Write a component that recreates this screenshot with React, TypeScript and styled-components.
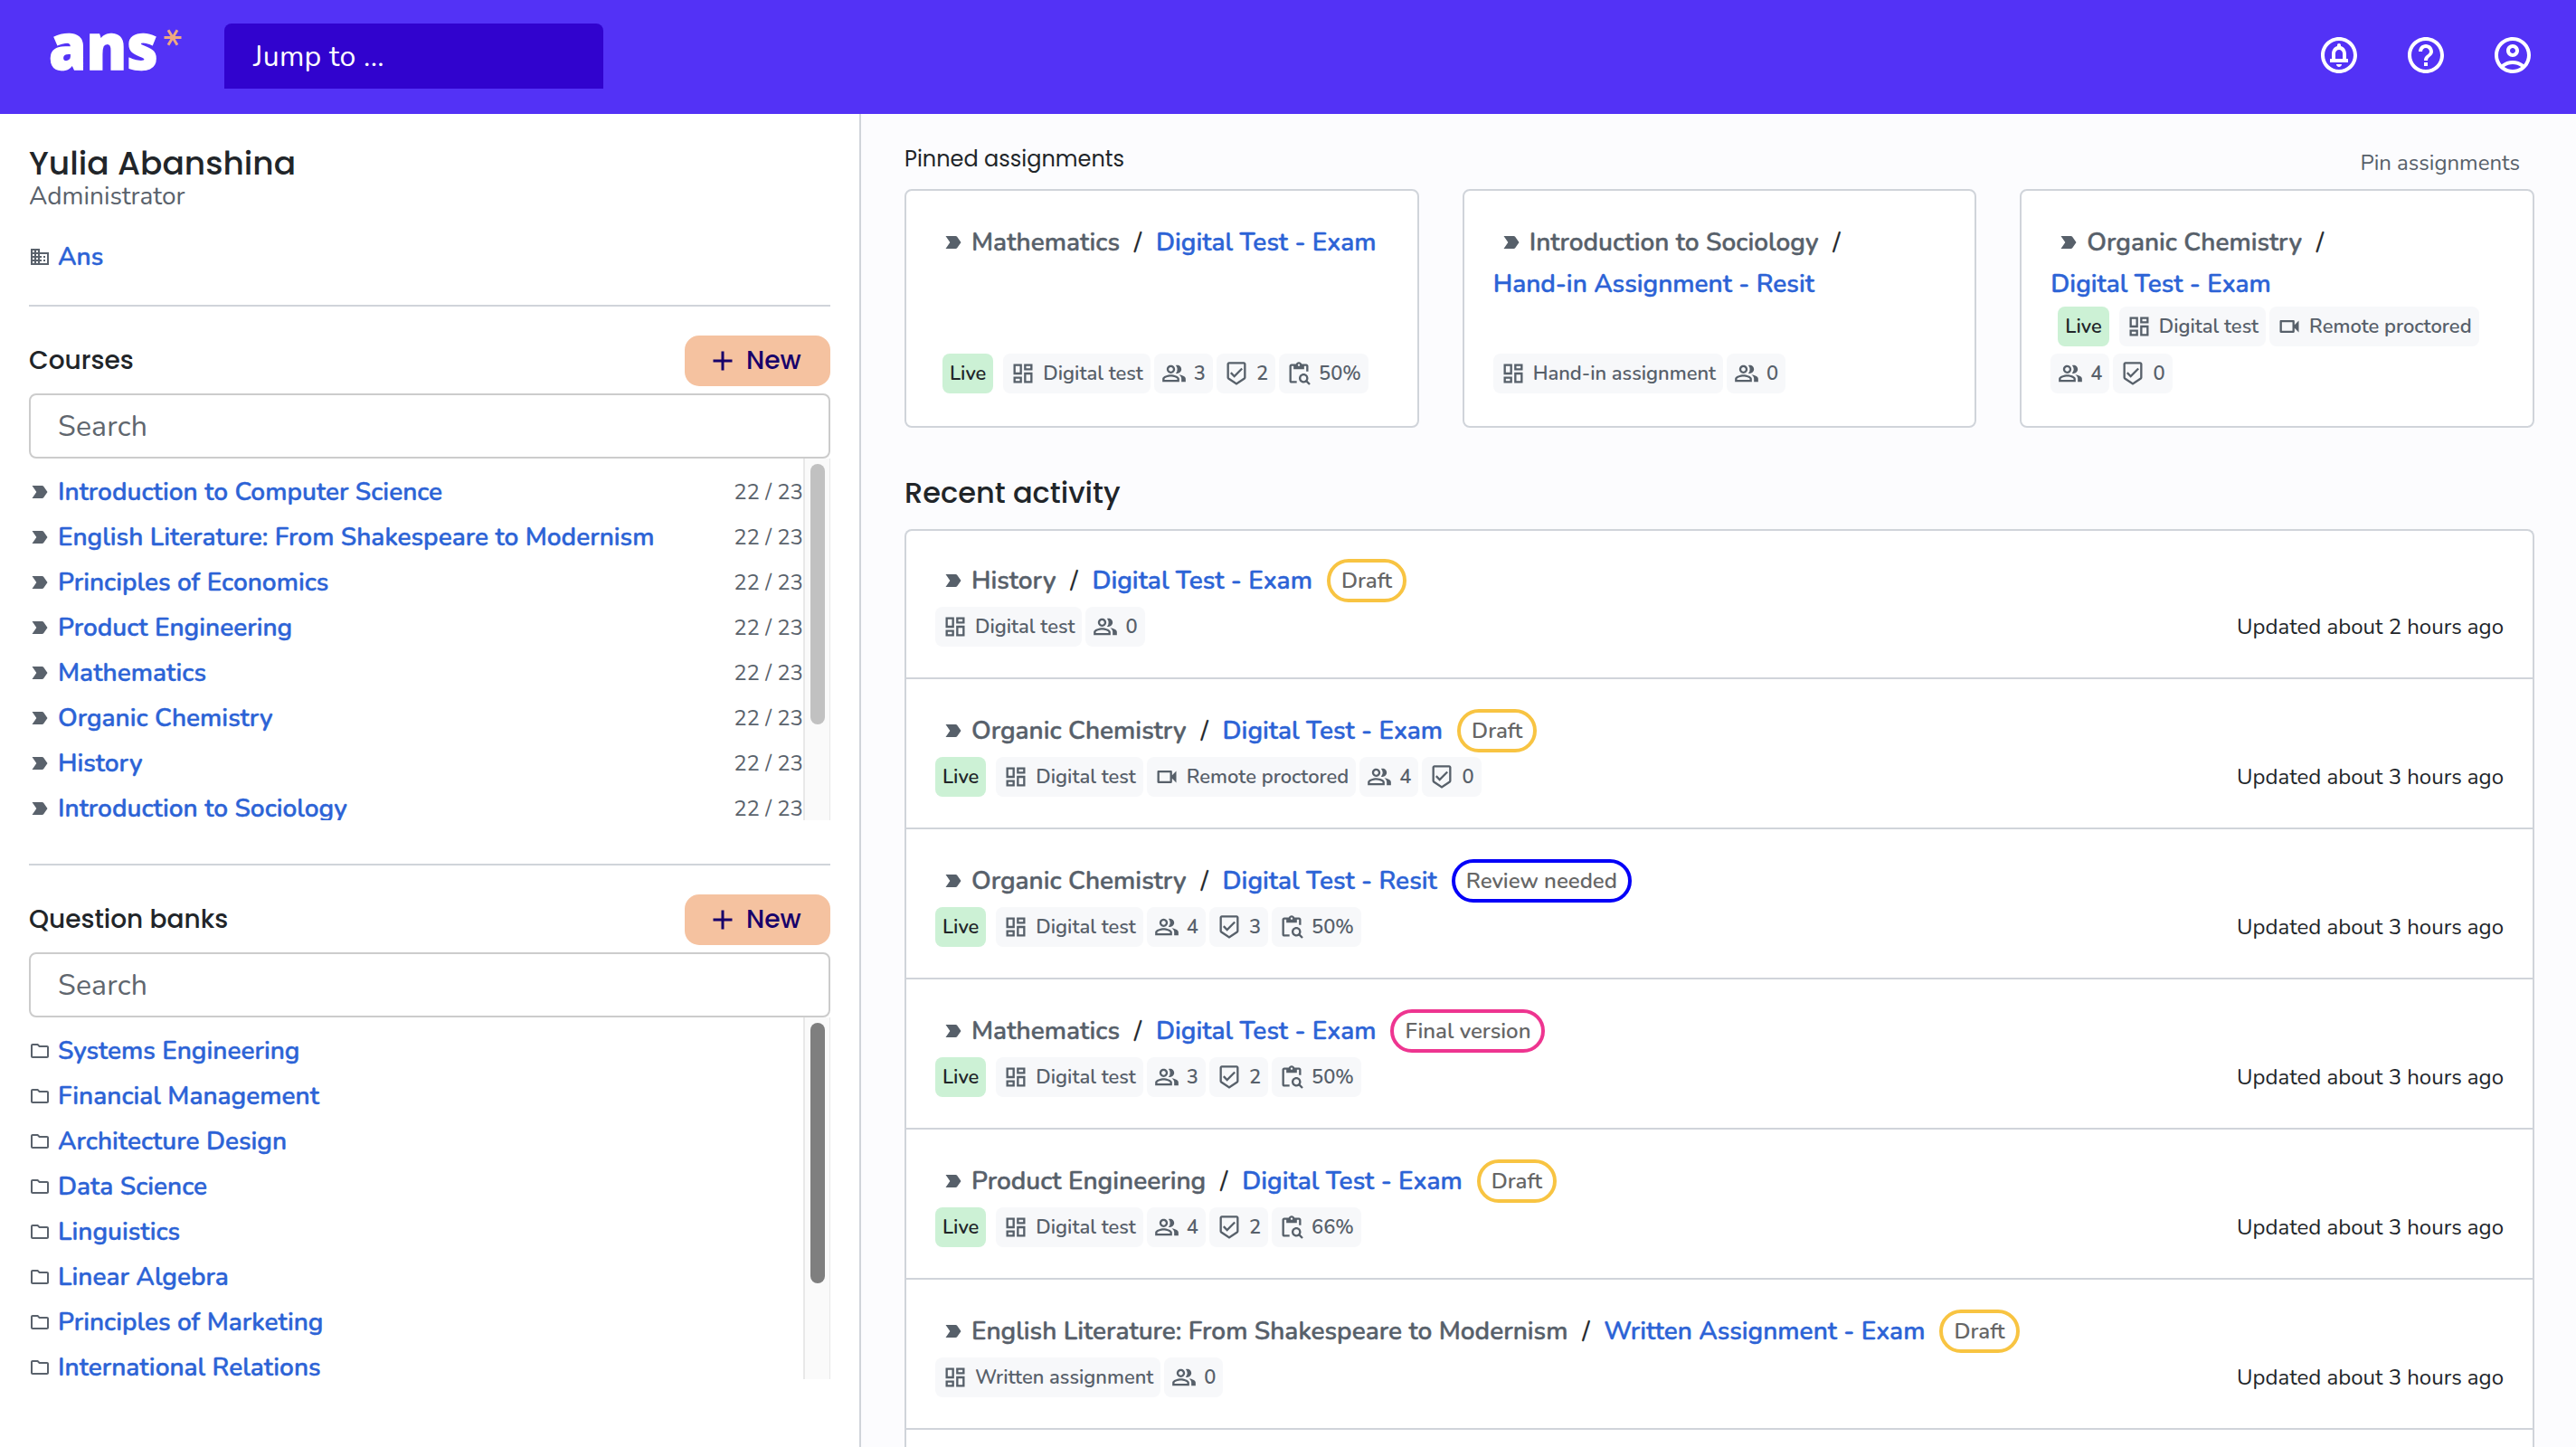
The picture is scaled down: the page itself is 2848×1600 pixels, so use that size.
import styled, { createGlobalStyle, css } from "styled-components";
import { IconType } from "react-icons";
import {
  MdAdd,
  MdHelpOutline,
  MdLabelImportant,
  MdOutlineAccountCircle,
  MdOutlineBeenhere,
  MdOutlineBusiness,
  MdOutlineCircleNotifications,
  MdOutlineContentPasteSearch,
  MdOutlineDashboard,
  MdOutlineFolder,
  MdOutlinePeopleAlt,
  MdOutlineVideocam,
} from "react-icons/md";

const courses = [
  "Introduction to Computer Science",
  "English Literature: From Shakespeare to Modernism",
  "Principles of Economics",
  "Product Engineering",
  "Mathematics",
  "Organic Chemistry",
  "History",
  "Introduction to Sociology",
];

const questionBanks = [
  "Systems Engineering",
  "Financial Management",
  "Architecture Design",
  "Data Science",
  "Linguistics",
  "Linear Algebra",
  "Principles of Marketing",
  "International Relations",
];

type Status = "Draft" | "Review needed" | "Final version";

interface Assignment {
  course: string;
  name: string;
  kind: string;
  live?: boolean;
  proctored?: boolean;
  members: number;
  reviewed?: number;
  progress?: string;
  status?: Status;
  updated?: string;
}

const pinned: Assignment[] = [
  { course: "Mathematics", name: "Digital Test - Exam", kind: "Digital test", live: true, members: 3, reviewed: 2, progress: "50%" },
  { course: "Introduction to Sociology", name: "Hand-in Assignment - Resit", kind: "Hand-in assignment", members: 0 },
  { course: "Organic Chemistry", name: "Digital Test - Exam", kind: "Digital test", live: true, proctored: true, members: 4, reviewed: 0 },
];

const recent: Assignment[] = [
  { course: "History", name: "Digital Test - Exam", kind: "Digital test", members: 0, status: "Draft", updated: "Updated about 2 hours ago" },
  { course: "Organic Chemistry", name: "Digital Test - Exam", kind: "Digital test", live: true, proctored: true, members: 4, reviewed: 0, status: "Draft", updated: "Updated about 3 hours ago" },
  { course: "Organic Chemistry", name: "Digital Test - Resit", kind: "Digital test", live: true, members: 4, reviewed: 3, progress: "50%", status: "Review needed", updated: "Updated about 3 hours ago" },
  { course: "Mathematics", name: "Digital Test - Exam", kind: "Digital test", live: true, members: 3, reviewed: 2, progress: "50%", status: "Final version", updated: "Updated about 3 hours ago" },
  { course: "Product Engineering", name: "Digital Test - Exam", kind: "Digital test", live: true, members: 4, reviewed: 2, progress: "66%", status: "Draft", updated: "Updated about 3 hours ago" },
  { course: "English Literature: From Shakespeare to Modernism", name: "Written Assignment - Exam", kind: "Written assignment", members: 0, status: "Draft", updated: "Updated about 3 hours ago" },
];

const App = () => {
  return (
    <Page>
      <GlobalStyle />
      <TopBar />
      <Body>
        <Sidebar />
        <Main />
      </Body>
    </Page>
  )
}

export default App;

const TopBar = () => (
  <TopBarContainer>
    <Logo>
      <LogoText>ans</LogoText>
      <Asterisk viewBox="0 0 20 20">
        <path d="M0.5 9.5H19.5M5 1.2L15 17.8M15 1.2L5 17.8" />
      </Asterisk>
    </Logo>
    <JumpTo>Jump to ...</JumpTo>
    <TopBarIcons>
      <MdOutlineCircleNotifications />
      <MdHelpOutline />
      <MdOutlineAccountCircle />
    </TopBarIcons>
  </TopBarContainer>
)

const Sidebar = () => (
  <SidebarContainer>
    <UserName>Yulia Abanshina</UserName>
    <UserRole>Administrator</UserRole>
    <School>
      <MdOutlineBusiness />
      <ItemLink>Ans</ItemLink>
    </School>
    <SidebarSection title="Courses" items={courses} icon={MdLabelImportant} count="22 / 23" thumb="#c1c1c1" />
    <SidebarSection title="Question banks" items={questionBanks} icon={MdOutlineFolder} thumb="#7f7f7f" />
  </SidebarContainer>
)

interface SidebarSectionProps {
  title: string;
  items: string[];
  icon: IconType;
  count?: string;
  thumb: string;
}

const SidebarSection = ({ title, items, icon: Icon, count, thumb }: SidebarSectionProps) => (
  <Section>
    <SectionHeader>
      <SectionTitle>{title}</SectionTitle>
      <NewButton><MdAdd />New</NewButton>
    </SectionHeader>
    <SearchField>Search</SearchField>
    <ListBox>
      <ItemList>
        {items.map((item) => (
          <Item key={item}>
            <Icon />
            <ItemLink>{item}</ItemLink>
            {count && <Count>{count}</Count>}
          </Item>
        ))}
      </ItemList>
      <ScrollTrack><ScrollThumb color={thumb} /></ScrollTrack>
    </ListBox>
  </Section>
)

const Main = () => (
  <MainContainer>
    <PinnedHeader>
      <PinnedTitle>Pinned assignments</PinnedTitle>
      <PinLink>Pin assignments</PinLink>
    </PinnedHeader>
    <Cards>
      {pinned.map((a) => (
        <Card key={a.course}>
          <AssignmentTitle assignment={a} />
          <Chips assignment={a} inset />
        </Card>
      ))}
    </Cards>
    <RecentTitle>Recent activity</RecentTitle>
    <Activity>
      {recent.map((a, i) => (
        <ActivityRow key={i}>
          <AssignmentTitle assignment={a} />
          <ActivityFooter>
            <Chips assignment={a} />
            <Updated>{a.updated}</Updated>
          </ActivityFooter>
        </ActivityRow>
      ))}
    </Activity>
  </MainContainer>
)

const AssignmentTitle = ({ assignment }: { assignment: Assignment }) => (
  <TitleRow>
    <CourseName>
      <MdLabelImportant />
      {assignment.course}
      <Slash>/</Slash>
    </CourseName>
    <AssignmentLink>{assignment.name}</AssignmentLink>
    {assignment.status && <StatusBadge $status={assignment.status}>{assignment.status}</StatusBadge>}
  </TitleRow>
)

const Chips = ({ assignment, inset }: { assignment: Assignment, inset?: boolean }) => (
  <ChipRow>
    {assignment.live && <LiveChip $inset={inset}>Live</LiveChip>}
    <Chip><MdOutlineDashboard />{assignment.kind}</Chip>
    {assignment.proctored && <Chip><MdOutlineVideocam />Remote proctored</Chip>}
    <Chip><MdOutlinePeopleAlt />{assignment.members}</Chip>
    {assignment.reviewed !== undefined && <Chip><MdOutlineBeenhere />{assignment.reviewed}</Chip>}
    {assignment.progress && <Chip><MdOutlineContentPasteSearch />{assignment.progress}</Chip>}
  </ChipRow>
)

const GlobalStyle = createGlobalStyle`
  * {
    box-sizing: border-box;
  }

  body {
    margin: 0;
    font-family: Nunito, Lato, sans-serif;
    color: #212529;
  }
`

const Page = styled.div`
  display: flex;
  flex-direction: column;
  height: 1600px;
  overflow: hidden;
  background: #fcfcfe;
`

const TopBarContainer = styled.header`
  display: flex;
  flex: none;
  height: 126px;
  padding: 26px 46px 0 54px;
  background: #5332f6;
  color: white;
`

const Logo = styled.div`
  display: flex;
  width: 194px;
  height: 72px;
`

const LogoText = styled.span`
  width: 120px;
  font: 900 71px/47px "Noto Sans", sans-serif;
  -webkit-text-stroke: 1.5px white;
  transform: scaleX(0.94);
  transform-origin: left;
`

const Asterisk = styled.svg`
  width: 20px;
  height: 20px;
  margin: 6px 0 0 7px;
  stroke: #eda981;
  stroke-width: 3;
  fill: none;
`

const JumpTo = styled.div`
  width: 419px;
  height: 72px;
  padding-left: 32px;
  border-radius: 8px 8px 0 0;
  background: #3103ce;
  font-size: 32px;
  line-height: 74px;
  letter-spacing: 0.3px;
`

const TopBarIcons = styled.div`
  display: flex;
  gap: 48px;
  margin-left: auto;
  padding-top: 11px;

  & svg {
    width: 48px;
    height: 48px;
  }
`

const Body = styled.div`
  display: flex;
  flex: 1;
  min-height: 0;
`

const SidebarContainer = styled.aside`
  width: 952px;
  flex: none;
  padding: 35px 32px 0;
  border-right: 2px solid #d0d4da;
  background: white;
`

const heading = css`
  margin: 0;
  font-family: Poppins, Inter, sans-serif;
  font-weight: 500;
  color: #212529;
`

const UserName = styled.h1`
  ${heading}
  font-size: 36px;
  line-height: 40px;
`

const UserRole = styled.div`
  font-size: 28px;
  line-height: 33px;
  color: #5a626c;
`

const School = styled.div`
  display: flex;
  align-items: center;
  gap: 8px;
  height: 30px;
  margin: 35px 0 38px;
  color: #5a626c;

  & svg {
    width: 24px;
    height: 24px;
  }
`

const Section = styled.section`
  width: 886px;
  padding-top: 32px;
  margin-bottom: 48px;
  border-top: 2px solid #d0d4da;
`

const SectionHeader = styled.div`
  display: flex;
  align-items: center;
  justify-content: space-between;
  height: 56px;
  margin-bottom: 8px;
`

const SectionTitle = styled.h2`
  ${heading}
  font-size: 28px;
`

const NewButton = styled.button`
  ${heading}
  display: flex;
  align-items: center;
  gap: 8px;
  width: 161px;
  height: 56px;
  padding: 0 0 0 24px;
  border: 0;
  border-radius: 16px;
  background: #f5c2a0;
  color: #17006b;
  font-size: 28px;

  & svg {
    width: 36px;
    height: 36px;
  }
`

const SearchField = styled.div`
  height: 72px;
  padding-left: 30px;
  border: 2px solid #cccccc;
  border-radius: 8px;
  font-size: 32px;
  line-height: 70px;
  letter-spacing: 0.2px;
  color: #5f666e;
`

const ListBox = styled.div`
  display: flex;
  height: 400px;
  overflow: hidden;
`

const ItemList = styled.div`
  flex: 1;
  padding-top: 12px;
`

const Item = styled.div`
  display: flex;
  align-items: center;
  gap: 8px;
  height: 50px;
  color: #5a626c;

  & svg {
    width: 24px;
    height: 24px;
  }
`

const ItemLink = styled.a`
  font-size: 28px;
  font-weight: 600;
  -webkit-text-stroke: 0.4px;
  color: #2c63d6;
`

const Count = styled.span`
  margin-left: auto;
  font-size: 24px;
`

const ScrollTrack = styled.div`
  width: 30px;
  padding: 6px 0 0 6px;
  border: solid #e8e8e8;
  border-width: 0 1px 0 2px;
  background: #fafafa;
`

const ScrollThumb = styled.div`
  width: 16px;
  height: 288px;
  border-radius: 8px;
  background: ${({ color }) => color};
`

const MainContainer = styled.main`
  display: flex;
  flex-direction: column;
  flex: 1;
  padding: 29px 46px 0 48px;
`

const PinnedHeader = styled.div`
  display: flex;
  justify-content: space-between;
  height: 54px;
`

const PinnedTitle = styled.h3`
  ${heading}
  font-size: 24px;
  font-weight: 400;
  line-height: 42px;
`

const PinLink = styled.a`
  padding: 5px 16px 0 0;
  font-size: 24px;
  line-height: 40px;
  color: #57606a;
`

const Cards = styled.div`
  display: grid;
  grid-template-columns: repeat(3, 1fr);
  gap: 48px;
  flex: none;
`

const Card = styled.div`
  display: flex;
  flex-direction: column;
  justify-content: space-between;
  height: 264px;
  padding: 34px 32px 36px;
  border: 2px solid #d0d4da;
  border-radius: 8px;
  background: white;
`

const TitleRow = styled.div`
  display: flex;
  flex-wrap: wrap;
  align-items: center;
  font-size: 28px;
  font-weight: 600;
  line-height: 46px;
  white-space: nowrap;
`

const CourseName = styled.span`
  display: flex;
  align-items: center;
  -webkit-text-stroke: 0.4px;
  color: #57606a;

  & svg {
    width: 24px;
    height: 24px;
    margin: 0 8px;
  }
`

const Slash = styled.span`
  margin: 0 16px;
  font-weight: 400;
  color: #212529;
`

const AssignmentLink = styled.a`
  -webkit-text-stroke: 0.4px;
  color: #2c63d6;
`

const badgeColors: Record<Status, string> = {
  "Draft": "#f8c442",
  "Review needed": "#0400f8",
  "Final version": "#ee3590",
}

const StatusBadge = styled.span<{ $status: Status }>`
  height: 48px;
  margin-left: 16px;
  padding: 0 12px;
  border: 4px solid ${({ $status }) => badgeColors[$status]};
  border-radius: 24px;
  font-size: 24px;
  font-weight: 600;
  line-height: 40px;
  color: #666666;
`

const ChipRow = styled.div`
  display: flex;
  flex-wrap: wrap;
  gap: 8px 4px;
`

const Chip = styled.span`
  display: flex;
  align-items: center;
  gap: 8px;
  height: 44px;
  padding: 0 8px;
  border-radius: 8px;
  background: #f7f8fa;
  font-size: 21.9px;
  font-weight: 600;
  line-height: 44px;
  color: #57606a;

  & svg {
    width: 28px;
    height: 28px;
  }
`

const LiveChip = styled(Chip)<{ $inset?: boolean }>`
  margin: 0 7px 0 ${({ $inset }) => ($inset ? 8 : 0)}px;
  background: #ccf1d5;
  color: #212529;
`

const RecentTitle = styled.h2`
  ${heading}
  margin: 50px 0 18px;
  font-size: 32px;
  line-height: 44px;
`

const Activity = styled.div`
  flex: 1;
  border: 2px solid #d0d4da;
  border-bottom: 0;
  border-radius: 8px 8px 0 0;
  background: white;
`

const ActivityRow = styled.div`
  height: 166px;
  padding: 33px 32px 0;
  border-bottom: 2px solid #d0d4da;

  &:first-child {
    height: 164px;
    padding-top: 31px;
  }

  ${TitleRow} {
    height: 48px;
    margin-bottom: 5px;
  }
`

const ActivityFooter = styled.div`
  display: flex;
  justify-content: space-between;
`

const Updated = styled.span`
  font-size: 24px;
  line-height: 44px;
`
